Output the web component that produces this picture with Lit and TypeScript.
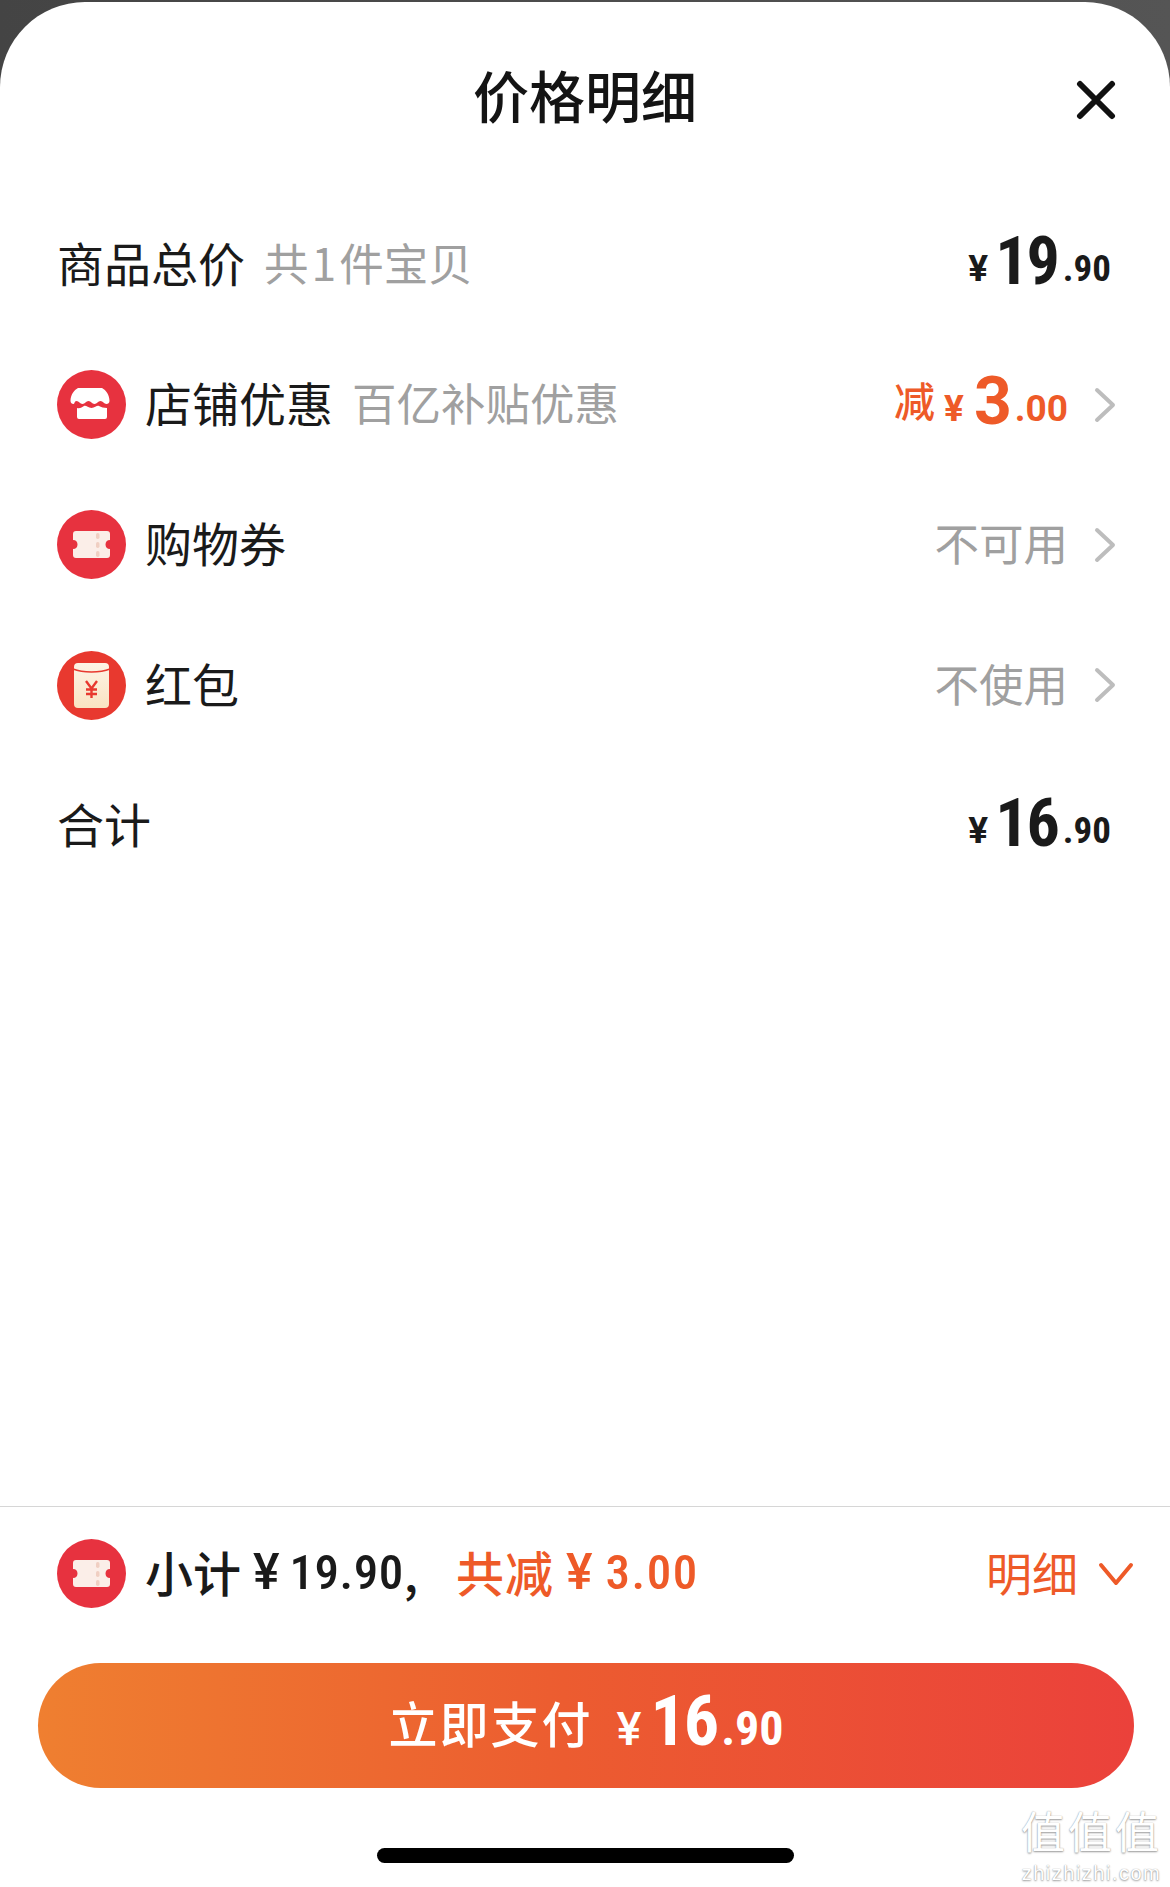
import { LitElement, html, css, svg } from 'lit';
import { customElement } from 'lit/decorators.js';

const storeIcon = svg`
  <path fill="#fff" d="M24 18h21c4 2 7.500 7 7.500 13 0 2-1.500 3-3 3-2.500 0-3.500-3-6-3s-3.500 3-6 3-3.500-3-6-3-3.500 3-6 3-3.500-3-6-3-1.500 3-3 3-3-1-3-3c0-6 3.500-11 7.500-13z"/>
  <path fill="#fff" d="M20 38c3 1 5-1 7-2s4 2 7.500 2 5.500-3 7.500-2 5 2 8 2v9a2 2 0 0 1-2 2H22a2 2 0 0 1-2-2z"/>`;

const ticketIcon = svg`
  <path fill="#fbeee8" d="M19 21h31c2 0 3 1 3 3v6c-3 0-4.500 2-4.500 4.500S50 39 53 39v6c0 2-1 3-3 3H19c-2 0-3-1-3-3v-6c3 0 4.500-2 4.500-4.500S19 30 16 30v-6c0-2 1-3 3-3z"/>
  <g fill="#f0cfc2"><rect x="39" y="23" width="3.500" height="6" rx="1.700"/><rect x="39" y="32" width="3.500" height="6" rx="1.700"/><rect x="39" y="41" width="3.500" height="6" rx="1.700"/></g>`;

const packetIcon = svg`
  <defs><linearGradient id="packet" x1="0" y1="0" x2="0" y2="1"><stop offset="0" stop-color="#fdf4e6"/><stop offset="1" stop-color="#fae3c2"/></linearGradient></defs>
  <rect x="17" y="12" width="35" height="45" rx="4" fill="url(#packet)"/>
  <path fill="none" stroke="#e8392f" stroke-width="1.500" d="M16 18c10 4 27 4 37 0"/>
  <path fill="none" stroke="#e8392f" stroke-width="2.400" d="M29 30l5.500 7.500L40 30M34.500 37.500V47M29 38.500h11M29 43h11"/>`;

@customElement('app-root')
export class AppRoot extends LitElement {
  static styles = css`
    :host {
      display: block;
      width: 1170px;
      height: 1887px;
      overflow: hidden;
      position: relative;
      background: linear-gradient(90deg, #444, #555);
      color: #1a1a1a;
      font-family: "Noto Sans CJK SC", "Liberation Sans", sans-serif;
    }

    .sheet {
      height: 1885px;
      margin-top: 2px;
      display: flex;
      flex-direction: column;
      background: #fff;
      border-radius: 85px 85px 0 0;
    }

    .header {
      height: 192px;
      box-sizing: border-box;
      padding: 57px 54px 0;
      display: grid;
      grid-template-columns: 1fr auto 1fr;
      align-items: start;
    }

    .title {
      font-size: 56px;
      line-height: 70px;
      font-weight: 500;
      color: #141414;
    }

    .close {
      justify-self: end;
      margin-top: 21px;
      display: block;
    }

    .row {
      height: 140.4px;
      padding: 0 54px 0 57px;
      display: flex;
      align-items: center;
      font-size: 47px;
    }

    .disc {
      flex: none;
      width: 69px;
      height: 69px;
      margin-right: 19px;
      display: block;
    }

    .label {
      line-height: 60px;
      margin-bottom: 5px;
    }

    .sub {
      margin: 0 0 5px 19px;
      font-size: 44.500px;
      line-height: 60px;
      color: #a0a0a0;
    }

    .one {
      margin: 0 3px;
    }

    .right {
      margin-left: auto;
      display: flex;
      align-items: center;
    }

    .muted {
      font-size: 44.500px;
      line-height: 60px;
      margin-bottom: 5px;
      color: #a0a0a0;
    }

    .chevron {
      margin-left: 26px;
      display: block;
    }

    .price {
      font-family: "Roboto", sans-serif;
      font-stretch: 75%;
      font-weight: 700;
      line-height: 70px;
      white-space: nowrap;
    }

    .plain {
      margin: 3px 5px 0 auto;
    }

    .yen {
      font-size: 37px;
      font-stretch: 100%;
      margin-right: 7px;
      vertical-align: 3px;
    }

    .big {
      font-size: 66px;
      letter-spacing: -2px;
    }

    .cents {
      font-size: 37px;
      margin-left: 5px;
      vertical-align: 3px;
    }

    .orange {
      color: #ee5a28;
    }

    .wide {
      font-stretch: 92%;
      margin-bottom: 1px;
    }

    .wide .yen {
      margin-right: 10px;
    }

    .cut {
      font-family: "Noto Sans CJK SC", sans-serif;
      font-size: 41px;
      font-weight: 500;
      margin-right: 9px;
      vertical-align: 7px;
    }

    .spacer {
      flex: 1;
    }

    .summary {
      border-top: 1px solid #d6d6d6;
      padding: 32px 36px 0 57px;
      height: 124px;
      box-sizing: content-box;
      display: flex;
      align-items: flex-start;
    }

    .totals {
      display: flex;
      align-items: center;
      height: 69px;
      font-size: 48px;
      font-weight: 500;
    }

    .totals > span {
      margin-bottom: 5px;
    }

    .totals > .num {
      font-family: "Roboto", sans-serif;
      font-stretch: 75%;
      font-size: 49px;
      font-weight: 500;
      letter-spacing: 0.500px;
      margin-bottom: 3px;
    }

    .totals > .num.orange {
      letter-spacing: 1.500px;
      margin-left: 3px;
    }

    .totals > .sym {
      font-family: "Roboto", sans-serif;
      font-size: 50px;
      font-weight: 500;
      margin: 0 10px 3px 12px;
    }

    .off {
      margin-left: 38px;
      letter-spacing: 1px;
    }

    .detail {
      margin-left: auto;
      height: 69px;
      display: flex;
      align-items: center;
      font-size: 46px;
      color: #ee5a28;
    }

    .detail span {
      margin-bottom: 5px;
    }

    .detail svg {
      display: block;
      margin-left: 20px;
    }

    .pay {
      margin: 0 36px 0 38px;
      height: 125px;
      border-radius: 63px;
      display: flex;
      align-items: center;
      justify-content: center;
      color: #fff;
      background: linear-gradient(90deg, #ef7f30 0%, #ec5c30 48%, #eb413b 100%);
    }

    .pay-label {
      font-size: 49px;
      font-weight: 500;
      letter-spacing: 2px;
      margin: 0 24px 8px 0;
    }

    .pay .price {
      margin-top: 10px;
    }

    .pay .yen {
      font-size: 47px;
      font-weight: 500;
      margin-right: 9px;
      vertical-align: baseline;
    }

    .pay .big {
      font-size: 70px;
    }

    .pay .cents {
      font-size: 48px;
      margin-left: 4px;
      vertical-align: baseline;
    }

    .home {
      width: 417px;
      height: 15px;
      margin: 60px auto 24px;
      border-radius: 8px;
      background: #000;
    }

    /* site stamp over the bottom corner */
    .stamp {
      position: absolute;
      right: 6px;
      top: 1798px;
      width: 145px;
      text-align: center;
      color: #fff;
      text-shadow: 0 1px 2px #9a9a9a, 0 0 1px #9a9a9a;
    }

    .stamp-mark {
      font-size: 44px;
      line-height: 64px;
      letter-spacing: 3px;
      white-space: nowrap;
    }

    .stamp-url {
      font-family: "Liberation Sans", sans-serif;
      font-size: 20px;
      line-height: 23px;
      letter-spacing: 1.500px;
    }
  `;

  private disc(color: string, icon: unknown) {
    return html`<svg class="disc" viewBox="0 0 69 69"><circle cx="34.500" cy="34.500" r="34.500" fill=${color}></circle>${icon}</svg>`;
  }

  private chevron() {
    return html`<svg class="chevron" width="22" height="36" viewBox="0 0 22 36" fill="none"
      stroke="#bdbdbd" stroke-width="4" stroke-linecap="round" stroke-linejoin="round"><path d="M3 3l16 15L3 33"></path></svg>`;
  }

  private price(whole: string, cents: string) {
    return html`<span class="yen">¥</span><span class="big">${whole}</span><span class="cents">.${cents}</span>`;
  }

  render() {
    return html`
      <div class="sheet">
        <div class="header">
          <span></span>
          <div class="title">价格明细</div>
          <svg class="close" width="40" height="40" viewBox="0 0 40 40" fill="none"
            stroke="#111" stroke-width="6" stroke-linecap="round"><path d="M4 4l32 32M36 4L4 36"></path></svg>
        </div>

        <div class="row">
          <span class="label">商品总价</span><span class="sub">共<span class="one">1</span>件宝贝</span>
          <div class="price plain">${this.price('19', '90')}</div>
        </div>
        <div class="row">
          ${this.disc('#e7323f', storeIcon)}
          <span class="label">店铺优惠</span><span class="sub">百亿补贴优惠</span>
          <div class="right">
            <div class="price wide orange"><span class="cut">减</span>${this.price('3', '00')}</div>
            ${this.chevron()}
          </div>
        </div>
        <div class="row">
          ${this.disc('#e7323f', ticketIcon)}
          <span class="label">购物券</span>
          <div class="right"><span class="muted">不可用</span>${this.chevron()}</div>
        </div>
        <div class="row">
          ${this.disc('#e8392f', packetIcon)}
          <span class="label">红包</span>
          <div class="right"><span class="muted">不使用</span>${this.chevron()}</div>
        </div>
        <div class="row">
          <span class="label">合计</span>
          <div class="price plain">${this.price('16', '90')}</div>
        </div>

        <div class="spacer"></div>

        <div class="summary">
          ${this.disc('#e7323f', ticketIcon)}
          <div class="totals">
            <span>小计</span><span class="sym">¥</span><span class="num">19.90</span><span>,</span>
            <span class="orange off">共减</span><span class="sym orange">¥</span><span class="num orange">3.00</span>
          </div>
          <div class="detail">
            <span>明细</span>
            <svg width="36" height="24" viewBox="0 0 36 24" fill="none" stroke="#ee5a28" stroke-width="4"
              stroke-linecap="round" stroke-linejoin="round"><path d="M3 3l15 18L33 3"></path></svg>
          </div>
        </div>

        <div class="pay">
          <span class="pay-label">立即支付</span>
          <div class="price">${this.price('16', '90')}</div>
        </div>

        <div class="home"></div>
      </div>

      <div class="stamp">
        <div class="stamp-mark">值值值</div>
        <div class="stamp-url">zhizhizhi.com</div>
      </div>
    `;
  }
}
